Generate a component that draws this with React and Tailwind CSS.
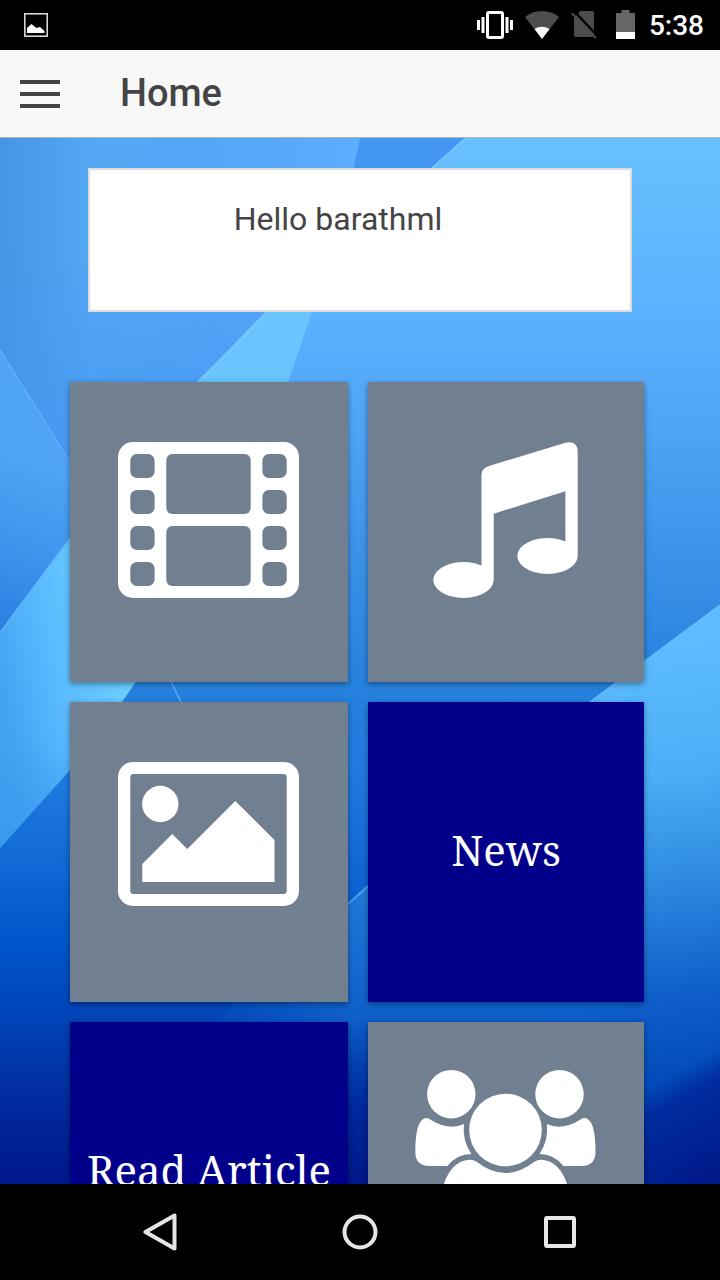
import React from "react";

function Wallpaper() {
  return (
    <svg
      aria-hidden="true"
      className="absolute inset-0 h-full w-full"
      viewBox="0 138 720 1046"
      preserveAspectRatio="none"
    >
      <defs>
        <linearGradient id="base" gradientUnits="userSpaceOnUse" x1="0" y1="138" x2="0" y2="1184">
          <stop offset="0" stopColor="#68c0ff" />
          <stop offset="0.155" stopColor="#5cb3fe" />
          <stop offset="0.25" stopColor="#52a8f8" />
          <stop offset="0.4" stopColor="#3b92e8" />
          <stop offset="0.53" stopColor="#2680de" />
          <stop offset="0.6" stopColor="#207ce0" />
          <stop offset="0.68" stopColor="#146cd8" />
          <stop offset="0.77" stopColor="#0055cb" />
          <stop offset="0.83" stopColor="#0046bc" />
          <stop offset="0.88" stopColor="#0038aa" />
          <stop offset="0.94" stopColor="#00259a" />
          <stop offset="1" stopColor="#00188a" />
        </linearGradient>
        <linearGradient id="corner" gradientUnits="userSpaceOnUse" x1="0" y1="0" x2="360" y2="0">
          <stop offset="0" stopColor="#4695e4" />
          <stop offset="0.25" stopColor="#53a8f3" />
          <stop offset="0.6" stopColor="#54a6f8" />
          <stop offset="1" stopColor="#5cacff" />
        </linearGradient>
        <linearGradient id="dusk" gradientUnits="userSpaceOnUse" x1="0" y1="250" x2="0" y2="480">
          <stop offset="0" stopColor="#4494f2" stopOpacity="0" />
          <stop offset="1" stopColor="#4494f2" stopOpacity="0.8" />
        </linearGradient>
        <linearGradient id="fold" gradientUnits="userSpaceOnUse" x1="60" y1="470" x2="0" y2="625">
          <stop offset="0" stopColor="#50a4f5" />
          <stop offset="0.5" stopColor="#3f95ed" />
          <stop offset="1" stopColor="#2c80e2" />
        </linearGradient>
        <linearGradient id="ribbon" gradientUnits="userSpaceOnUse" x1="0" y1="700" x2="140" y2="670">
          <stop offset="0" stopColor="#43a2f1" />
          <stop offset="0.45" stopColor="#5bbcff" />
          <stop offset="1" stopColor="#6dd2ff" />
        </linearGradient>
        <linearGradient id="ribbonShade" gradientUnits="userSpaceOnUse" x1="50" y1="740" x2="20" y2="850">
          <stop offset="0" stopColor="#3a98ec" stopOpacity="0" />
          <stop offset="1" stopColor="#3a98ec" stopOpacity="0.8" />
        </linearGradient>
        <linearGradient id="wave" gradientUnits="userSpaceOnUse" x1="640" y1="650" x2="710" y2="1100">
          <stop offset="0" stopColor="#5dbcff" />
          <stop offset="0.28" stopColor="#4caef5" />
          <stop offset="0.52" stopColor="#2d89e0" />
          <stop offset="0.75" stopColor="#0f60cb" />
          <stop offset="1" stopColor="#0044b4" />
        </linearGradient>
        <linearGradient id="wash" gradientUnits="userSpaceOnUse" x1="0" y1="880" x2="0" y2="1110">
          <stop offset="0" stopColor="#207cda" />
          <stop offset="0.61" stopColor="#0f5ec9" />
          <stop offset="1" stopColor="#003aa6" stopOpacity="0" />
        </linearGradient>
        <linearGradient id="washSide" gradientUnits="userSpaceOnUse" x1="200" y1="0" x2="400" y2="0">
          <stop offset="0" stopColor="#fff" stopOpacity="0.1" />
          <stop offset="0.75" stopColor="#fff" />
        </linearGradient>
        <mask id="washMask" maskUnits="userSpaceOnUse" x="0" y="138" width="720" height="1046">
          <rect x="0" y="138" width="720" height="1046" fill="url(#washSide)" />
        </mask>
        <linearGradient id="deep" gradientUnits="userSpaceOnUse" x1="677" y1="1072" x2="731" y2="1168">
          <stop offset="0" stopColor="#0034a8" stopOpacity="0" />
          <stop offset="0.22" stopColor="#002da0" />
          <stop offset="1" stopColor="#001888" />
        </linearGradient>
      </defs>
      <rect x="0" y="138" width="720" height="1046" fill="url(#base)" />
      <path d="M0 138H466L198 382L70 500V640H0Z" fill="url(#corner)" />
      <path d="M0 250H340L198 382L70 500V640H0Z" fill="url(#dusk)" />
      <path d="M360 138H466L335 257Z" fill="#4496f3" />
      <path d="M265 312H312L288 382H198Z" fill="#6ac5ff" />
      <path d="M466 138L430 170M268 312L198 382" stroke="#78c6ff" strokeWidth="2" fill="none" />
      <path d="M0 350L70 462V538L0 633Z" fill="url(#fold)" />
      <path d="M0 350L70 462M165 670L182 704" stroke="#5caefa" strokeWidth="1.500" fill="none" />
      <path d="M0 633L70 538L160 640L135 683L122 702L70 770L0 848Z" fill="url(#ribbon)" />
      <path d="M0 680H140L122 702L70 770L0 848Z" fill="url(#ribbonShade)" />
      <path d="M0 633L70 538" stroke="#62b6fa" strokeWidth="1.500" fill="none" />
      <path d="M348 904L368 886L540 850V1184H348L215 1020Z" fill="url(#wash)" mask="url(#washMask)" />
      <path d="M348 904L368 886" stroke="#4ca0ee" strokeWidth="2" fill="none" />
      <path d="M720 605L590 702L540 740V1184H720Z" fill="url(#wave)" />
      <path d="M720 605L590 702" stroke="#6cbcfc" strokeWidth="1.500" fill="none" />
      <path d="M720 1040L540 1142V1184H720Z" fill="url(#deep)" />
    </svg>
  );
}

function StatusBar() {
  return (
    <div className="flex h-[50px] shrink-0 items-center justify-between bg-black pr-4 pl-6">
      <svg width="24" height="24" viewBox="0 0 24 24" aria-hidden="true">
        <rect x="0.8" y="0.8" width="22.4" height="22.4" fill="none" stroke="#d4d6d2" strokeWidth="1.6" />
        <path d="M3 20V15L7.500 11L12.500 15L16 14L20.500 18V20Z" fill="#fff" />
      </svg>
      <div className="flex items-center gap-3">
        <svg width="36" height="28" viewBox="0 0 36 28" fill="#fff" aria-hidden="true">
          <path d="M0 9h3v10H0zM4.500 6h3v16h-3zM28.500 6h3v16h-3zM33 9h3v10h-3z" />
          <rect x="10.500" y="1.500" width="15" height="25" rx="1.500" fill="none" stroke="#fff" strokeWidth="3" />
        </svg>
        <svg width="34" height="28" viewBox="0 0 34 28" aria-hidden="true">
          <path d="M0 6Q7 0 17 0T34 6L17 28Z" fill="#4d4d4d" />
          <path d="M9.500 18Q17 13.500 24.500 18L17 28Z" fill="#fff" />
        </svg>
        <svg width="26" height="28" viewBox="0 0 26 28" aria-hidden="true">
          <path d="M9.500 0H21Q23 0 23 2V24Q23 26 21 26H5Q3 26 3 24V7Z" fill="#4d4d4d" />
          <path d="M3 0L26 24.500" stroke="#000" strokeWidth="2.500" />
          <path d="M0.800 2.200L24.800 27" stroke="#4d4d4d" strokeWidth="2.200" />
        </svg>
        <svg width="26" height="30" viewBox="-7 0 26 30" aria-hidden="true">
          <path d="M5.500 0H13.500V3H19V23H0V3H5.500Z" fill="#666" />
          <path d="M0 22H19V29H0Z" fill="#fff" />
        </svg>
        <span className="pt-0.5 pl-0.5 font-[Roboto,sans-serif] text-[28px] leading-8 font-medium text-white">5:38</span>
      </div>
    </div>
  );
}

function FilmIcon() {
  return (
    <svg width="181" height="156" viewBox="0 0 181 156" aria-hidden="true">
      <rect width="181" height="156" rx="15" fill="#fff" />
      <g fill="#708090">
        {[12, 48, 84, 120].map((y) => (
          <g key={y}>
            <rect x="12.3" y={y} width="24.300" height="24" rx="6.500" />
            <rect x="144.400" y={y} width="24.300" height="24" rx="6.500" />
          </g>
        ))}
        <rect x="48.300" y="12" width="84.400" height="60" rx="6" />
        <rect x="48.300" y="84" width="84.400" height="60" rx="6" />
      </g>
    </svg>
  );
}

function MusicIcon() {
  return (
    <svg width="145" height="156" viewBox="0 0 145 156" fill="#fff" aria-hidden="true">
      <path d="M48.500 33Q48.500 26.500 56 24L132.500 0.700Q144.700 -1.500 144.700 10V114A30.200 18 0 1 1 132.400 99.500V49.300L60.700 71.700V138A30.200 18 0 1 1 48.500 123.500Z" />
    </svg>
  );
}

function PictureIcon() {
  return (
    <svg width="181" height="144" viewBox="0 0 181 144" fill="#fff" aria-hidden="true">
      <rect width="181" height="144" rx="15" />
      <rect x="12.300" y="12" width="156.400" height="120" rx="3" fill="#708090" />
      <circle cx="42.300" cy="42" r="18.200" />
      <path d="M24.300 102L54.200 72L69.300 87L117.300 39L156.500 78V120H24.300Z" />
    </svg>
  );
}

function PeopleIcon() {
  const shoulder =
    "M11.700 48Q13.500 48 16 50Q34 61 49 54Q47 70 56.300 84Q42 84 32.300 96H15Q0.300 96 0.300 82Q0.300 48 11.700 48Z";
  return (
    <svg width="181" height="168" viewBox="0 0 181 168" fill="#fff" aria-hidden="true">
      <circle cx="36.300" cy="24.200" r="24.200" />
      <circle cx="144.500" cy="24.200" r="24.200" />
      <circle cx="90.500" cy="60" r="36.300" />
      <path d={shoulder} />
      <path d={shoulder} transform="translate(180.800 0) scale(-1 1)" />
      <path d="M54 89.800Q58 89.500 62 92Q90.500 114 119 92Q123 89.500 127 89.800C145 91 156 112 156 142Q156 168 132 168H49Q25 168 25 142C25 112 36 91 54 89.800Z" />
    </svg>
  );
}

const tileBase =
  "flex h-[300px] min-w-0 cursor-pointer justify-center shadow-[0_2px_6px_rgba(0,0,0,0.4)]";

function IconTile({ label, children, className = "pt-[60px]" }) {
  return (
    <button type="button" aria-label={label} className={`${tileBase} items-start bg-[#708090] pr-0.5 ${className}`}>
      {children}
    </button>
  );
}

function TextTile({ children }) {
  return (
    <button
      type="button"
      className={`${tileBase} items-center bg-[#00008b] pb-1 font-['Noto_Serif','Liberation_Serif',serif] text-[42px] leading-[60px] whitespace-nowrap text-white`}
    >
      {children}
    </button>
  );
}

function NavBar() {
  const button = "flex flex-1 cursor-pointer items-center justify-center";
  return (
    <nav className="flex h-24 shrink-0 bg-black px-[60px]">
      <button type="button" aria-label="Back" className={button}>
        <svg width="34" height="38" viewBox="0 0 34 38" fill="none" stroke="#e6e6e6" strokeWidth="4" strokeLinejoin="round">
          <path d="M31.500 2.500V35.500L2.500 19Z" />
        </svg>
      </button>
      <button type="button" aria-label="Home" className={button}>
        <svg width="36" height="36" viewBox="0 0 36 36" fill="none" stroke="#e6e6e6" strokeWidth="4">
          <circle cx="18" cy="18" r="15.500" />
        </svg>
      </button>
      <button type="button" aria-label="Recent apps" className={button}>
        <svg width="32" height="32" viewBox="0 0 32 32" fill="none" stroke="#e6e6e6" strokeWidth="4">
          <rect x="2" y="2" width="28" height="28" rx="1" />
        </svg>
      </button>
    </nav>
  );
}

export default function App() {
  return (
    <div className="flex h-screen flex-col overflow-hidden font-[Roboto,sans-serif] text-[#444]">
      <StatusBar />
      <header className="flex h-[88px] shrink-0 items-center gap-[60px] border-b border-[#b2b2b2] bg-[#f8f8f8] px-5">
        <button type="button" aria-label="Menu" className="flex w-10 cursor-pointer flex-col gap-2">
          <span className="h-1 w-full bg-[#444]" />
          <span className="h-1 w-full bg-[#444]" />
          <span className="h-1 w-full bg-[#444]" />
        </button>
        <h1 className="pb-0.5 text-[38px] leading-[44px] font-medium">Home</h1>
      </header>
      <main className="relative min-h-0 flex-1 overflow-hidden">
        <Wallpaper />
        <div className="relative">
          <div className="px-[88px] pt-[30px]">
            <section className="h-36 border-2 border-[#ddd] bg-white pt-[29px] pr-11 text-center">
              <p className="text-[32px] leading-10">Hello barathml</p>
            </section>
          </div>
          <div className="mt-[70px] grid grid-cols-[278fr_276fr] gap-5 pr-[76px] pl-[70px]">
            <IconTile label="Videos">
              <FilmIcon />
            </IconTile>
            <IconTile label="Music">
              <MusicIcon />
            </IconTile>
            <IconTile label="Pictures">
              <PictureIcon />
            </IconTile>
            <TextTile>News</TextTile>
            <TextTile>Read Article</TextTile>
            <IconTile label="People" className="pt-12">
              <PeopleIcon />
            </IconTile>
          </div>
        </div>
      </main>
      <NavBar />
    </div>
  );
}
